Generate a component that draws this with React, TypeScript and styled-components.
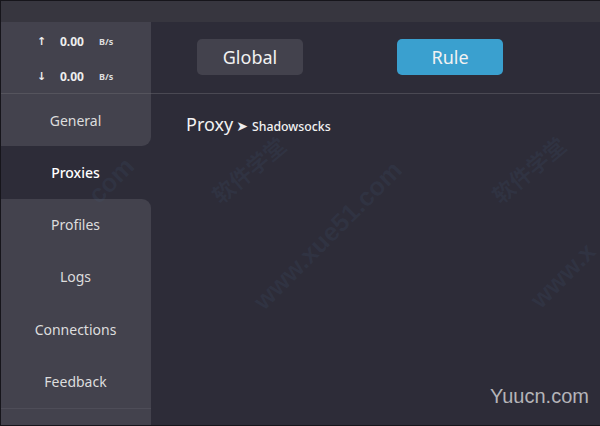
import React from "react";
import styled, { createGlobalStyle } from "styled-components";

const navBottom = ["Profiles", "Logs", "Connections", "Feedback"];

// faint site stamps that sit over the whole shot
const cnStamps = [{ x: 203, y: 152 }, { x: 483, y: 152 }];
const urlStamps = [
  { x: 228, y: 220, text: "www.xue51.com" },
  { x: 522, y: 260, text: "www.x" },
  { x: 84, y: 165, text: "com" },
];

export default function App() {
  return <Page>
    <GlobalStyle />
    <TopBar />
    <Body>
      <Sidebar>
        <UpperPanel>
          <Speeds>
            <SpeedRow><Arrow>↑</Arrow><Value>0.00</Value><Unit>B/s</Unit></SpeedRow>
            <SpeedRow><Arrow>↓</Arrow><Value>0.00</Value><Unit>B/s</Unit></SpeedRow>
          </Speeds>
          <NavItem>General</NavItem>
        </UpperPanel>
        <NavItem $active>Proxies</NavItem>
        <LowerPanel>
          {navBottom.map((item) => <NavItem key={item}>{item}</NavItem>)}
          <PanelFoot />
        </LowerPanel>
      </Sidebar>
      <Main>
        <Modes>
          <ModeButton>Global</ModeButton>
          <ModeButton $active>Rule</ModeButton>
        </Modes>
        <ProxyRow>
          <ProxyTitle>Proxy</ProxyTitle>
          <ProxyArrow>➤</ProxyArrow>
          <ProxyName>Shadowsocks</ProxyName>
        </ProxyRow>
      </Main>
    </Body>
    {cnStamps.map((s) => <StampCn key={s.x} $x={s.x} $y={s.y}>软件学堂</StampCn>)}
    {urlStamps.map((s) => <StampUrl key={s.x} $x={s.x} $y={s.y}>{s.text}</StampUrl>)}
    <SiteMark>Yuucn.com</SiteMark>
  </Page>;
}

const GlobalStyle = createGlobalStyle`
  html, body {
    margin: 0;
    padding: 0;
    background: #2d2c38;
  }
`;

const Page = styled.div`
  position: relative;
  box-sizing: border-box;
  width: 600px;
  height: 426px;
  overflow: hidden;
  background: #2d2c38;
  border-top: 1px solid #16151b;
  border-left: 1px solid #16151b;
  border-bottom: 1px solid #16151b;
  font-family: "Noto Sans", "Open Sans", sans-serif;
  color: #eee;
`;

const TopBar = styled.div`
  height: 21px;
  background: #37363f;
`;

const Body = styled.div`
  display: flex;
  height: 403px;
`;

const Sidebar = styled.div`
  width: 150px;
  flex-shrink: 0;
  display: flex;
  flex-direction: column;
`;

const UpperPanel = styled.div`
  background: #43424d;
  border-bottom-right-radius: 9px;
`;

const LowerPanel = styled.div`
  flex: 1;
  background: #43424d;
  border-top-right-radius: 9px;
`;

const PanelFoot = styled.div`
  border-top: 1px solid #4e4d58;
`;

const Speeds = styled.div`
  height: 72px;
  box-sizing: border-box;
  padding-top: 2px;
  border-bottom: 1px solid #55545d;
`;

const SpeedRow = styled.div`
  height: 35px;
  display: flex;
  align-items: center;
  padding-left: 36px;
  font-weight: 700;
`;

const Arrow = styled.span`
  width: 23px;
  font-size: 11px;
  font-family: "DejaVu Sans", sans-serif;
`;

const Value = styled.span`
  width: 39px;
  font-size: 12px;
`;

const Unit = styled.span`
  font-size: 9px;
  color: #ddd;
`;

const NavItem = styled.div<{ $active?: boolean }>`
  height: 52.25px;
  display: flex;
  align-items: center;
  justify-content: center;
  padding-right: 1px;
  font-size: 14px;
  font-weight: ${(p) => (p.$active ? 500 : 400)};
  color: ${(p) => (p.$active ? "#fff" : "#ddd")};
`;

const Main = styled.div`
  flex: 1;
`;

const Modes = styled.div`
  height: 72px;
  box-sizing: border-box;
  border-bottom: 1px solid #4a4953;
  padding: 17px 0 0 46px;
  display: flex;
  gap: 94px;
`;

const ModeButton = styled.div<{ $active?: boolean }>`
  width: 106px;
  height: 36px;
  border-radius: 5px;
  display: flex;
  align-items: center;
  justify-content: center;
  font-size: 18px;
  color: #f2f2f2;
  background: ${(p) => (p.$active ? "#3aa0cf" : "#43424d")};
`;

const ProxyRow = styled.div`
  display: flex;
  align-items: baseline;
  padding: 18px 0 0 35px;
`;

const ProxyTitle = styled.span`
  font-size: 18px;
  color: #f2f2f2;
`;

const ProxyArrow = styled.span`
  margin: 0 4px 0 3px;
  font-size: 14px;
  font-family: "DejaVu Sans", sans-serif;
`;

const ProxyName = styled.span`
  font-size: 12.3px;
  font-weight: 500;
  color: #f2f2f2;
`;

const StampCn = styled.div<{ $x: number; $y: number }>`
  position: absolute;
  left: ${(p) => p.$x}px;
  top: ${(p) => p.$y}px;
  transform: rotate(-40deg);
  font-family: "Noto Sans CJK SC", sans-serif;
  font-size: 22px;
  font-weight: 700;
  white-space: nowrap;
  color: rgba(70, 100, 140, 0.13);
  pointer-events: none;
`;

const StampUrl = styled.div<{ $x: number; $y: number }>`
  position: absolute;
  left: ${(p) => p.$x}px;
  top: ${(p) => p.$y}px;
  transform: rotate(-45deg);
  font-family: "Liberation Sans", Arial, sans-serif;
  font-size: 25.5px;
  font-weight: 700;
  white-space: nowrap;
  color: rgba(70, 100, 140, 0.13);
  pointer-events: none;
`;

const SiteMark = styled.div`
  position: absolute;
  left: 489px;
  top: 384px;
  font-family: "Liberation Sans", Arial, sans-serif;
  font-size: 20px;
  color: #b4b4b8;
`;
